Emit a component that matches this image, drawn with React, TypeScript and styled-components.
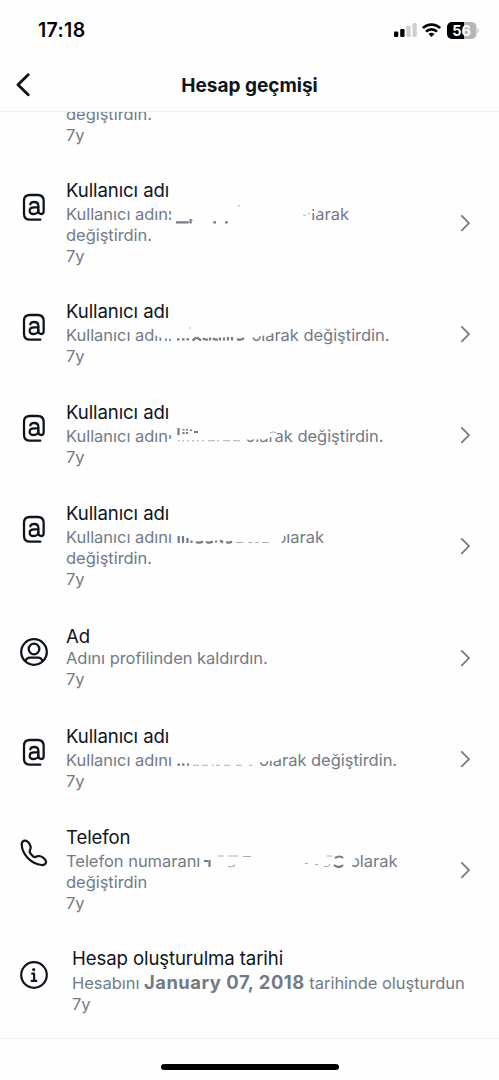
import React from "react";
import styled, { createGlobalStyle } from "styled-components";

const GlobalStyle = createGlobalStyle`
  * { box-sizing: border-box; }
  body {
    margin: 0;
    background: #fefefe;
    font-family: Inter, "Liberation Sans", sans-serif;
    color: #10151b;
  }
`;

const Screen = styled.div`
  width: 499px;
  height: 1080px;
  display: flex;
  flex-direction: column;
  overflow: hidden;
  background: #fefefe;
`;

const StatusBar = styled.div`
  height: 60px;
  flex: none;
  display: flex;
  align-items: center;
  justify-content: space-between;
  padding: 0 20.5px 0 38px;
`;

const Clock = styled.span`
  font-size: 19.5px;
  font-weight: 600;
  line-height: 24px;
  letter-spacing: 0.35px;
  color: #050505;
`;

const StatusIcons = styled.div`
  display: flex;
  align-items: center;
  gap: 5.5px;
`;

const Header = styled.header`
  height: 52px;
  flex: none;
  display: grid;
  grid-template-columns: 60px 1fr 60px;
  align-items: center;
  padding-bottom: 1px;
  border-bottom: 1px solid #eef0f2;
`;

const BackButton = styled.button`
  display: flex;
  padding: 0 0 0 15px;
  border: 0;
  background: none;
`;

const Title = styled.h1`
  margin: 0;
  padding-top: 1px;
  text-align: center;
  font-size: 19px;
  font-weight: 700;
  line-height: 24px;
`;

const List = styled.main`
  height: 927px;
  flex: none;
  overflow: hidden;
  border-bottom: 1px solid #eef0f2;
`;

const Tail = styled.div`
  height: 51px;
  margin-top: -8.5px;
  margin-bottom: 8px;
  padding-left: 66px;
`;

const Row = styled.section<{ $h: number }>`
  height: ${(p) => p.$h}px;
  display: grid;
  grid-template-columns: 66px 1fr 39px;
  align-items: center;
`;

const IconSlot = styled.div`
  align-self: start;
  width: 66px;
  height: 28px;
  margin-top: 30.5px;
  padding-left: 20px;
  display: flex;
  align-items: center;
`;

const Body = styled.div<{ $indent?: boolean }>`
  padding-left: ${(p) => (p.$indent ? 6 : 0)}px;
  white-space: nowrap;
`;

const Name = styled.h2`
  margin: 0;
  font-size: 18.6px;
  font-weight: 400;
  line-height: 22px;
  letter-spacing: -0.1px;
`;

const Line = styled.div<{ $gap?: number }>`
  position: relative;
  display: flex;
  align-items: baseline;
  margin-top: ${(p) => p.$gap ?? 0}px;
  font-size: 16.5px;
  line-height: 21px;
  letter-spacing: -0.04px;
  color: #737b85;
`;

const Lead = styled.span<{ $w: number }>`
  flex: none;
  width: ${(p) => p.$w}px;
`;

const Strong = styled.strong`
  font-size: 18.4px;
  font-weight: 700;
  letter-spacing: 0.53px;
  margin: 0 4.5px;
`;

const Scribble = styled.svg`
  position: absolute;
  left: 0;
  top: 0;
  overflow: visible;
`;

const HomeArea = styled.footer`
  flex: 1;
  display: flex;
  justify-content: center;
  padding-top: 25px;
`;

const HomeBar = styled.div`
  width: 178px;
  height: 6px;
  border-radius: 3px;
  background: #000;
`;

const BatteryLabel = styled.text`
  font: 700 14.5px Inter, sans-serif;
  fill: #fff;
`;

const Signal = () => (
  <svg width="23" height="14" viewBox="0 0 23 14">
    <rect x="0" y="8.6" width="4.3" height="5.4" rx="1.2" />
    <rect x="6.2" y="6" width="4.3" height="8" rx="1.2" />
    <rect x="12.4" y="3" width="4.3" height="11" rx="1.2" fill="#cfcfcf" />
    <rect x="18.5" y="0" width="4.3" height="14" rx="1.2" fill="#cfcfcf" />
  </svg>
);

const Wifi = () => (
  <svg width="19" height="14" viewBox="0 0 19 14" fill="none" stroke="#000" strokeWidth="2.7">
    <path d="M.9 5.1a12.3 12.3 0 0 1 17.2 0" />
    <path d="M4 8.6a7.8 7.8 0 0 1 11 0" />
    <path d="M6.5 11.1a4.4 4.4 0 0 1 6 0L9.5 14z" fill="#000" stroke="none" />
  </svg>
);

const Battery = () => (
  <svg width="32" height="17" viewBox="0 0 32 17">
    <defs>
      <clipPath id="cell"><rect width="29.5" height="17" rx="5" /></clipPath>
    </defs>
    <g clipPath="url(#cell)">
      <rect width="30" height="17" fill="#b5b5b5" />
      <rect width="17" height="17" fill="#000" />
    </g>
    <path d="M30.500 5.800c1.600.6 1.600 4.800 0 5.400z" fill="#b5b5b5" />
    <BatteryLabel x="14.500" y="13.700" textAnchor="middle">56</BatteryLabel>
  </svg>
);

const Back = () => (
  <svg width="16" height="24" viewBox="0 0 16 24" fill="none" stroke="#0d1217" strokeWidth="2.8" strokeLinecap="round" strokeLinejoin="round">
    <path d="M13.200 1.700 3 11.700l10.200 10" />
  </svg>
);

const Chevron = () => (
  <svg width="12" height="19" viewBox="0 0 12 19" fill="none" stroke="#737b85" strokeWidth="1.8" strokeLinecap="round" strokeLinejoin="round">
    <path d="M1.800 2.900 9 10.100l-7.200 7.200" />
  </svg>
);

const AtIcon = () => (
  <svg width="28" height="28" viewBox="0 0 84 84" fill="none" stroke="#10151b" strokeWidth="6.800" strokeLinecap="round" strokeLinejoin="round">
    <path d="M61 80H30C18 80 12 73 12 62V24C12 12 19 6 30 6H53C65 6 71 13 71 24V54C71 60 69 63 65 63C59 63 55 60 55 54V38C55 31 50 27 43 27C37 27 32 30 31 34" />
    <path d="M55 43H43C34 43 29 47 29 53S34 63 41 63C49 63 55 58 55 51" />
  </svg>
);

const ProfileIcon = () => (
  <svg width="28" height="28" viewBox="0 0 28 28" fill="none" stroke="#10151b" strokeWidth="2.300" strokeLinejoin="round">
    <circle cx="14" cy="14" r="12.800" />
    <circle cx="14" cy="11" r="5.300" />
    <path d="M5.600 23.200C6.100 20.500 7.700 19.600 10 19.600h8c2.300 0 3.900.9 4.400 3.600" />
  </svg>
);

const PhoneIcon = () => (
  <svg width="28" height="28" viewBox="0 0 84 84" fill="none" stroke="#10151b" strokeWidth="6.600" strokeLinejoin="round">
    <path d="M17 5C11 3 5 9 5 16C6 46 33 75 65 78C72 79 80 73 78 67C76 59 66 52 58 51C52 50 48 56 43 54C38 52 30 43 29 38C28 33 34 29 32 24C30 16 24 7 17 5Z" />
  </svg>
);

const InfoIcon = () => (
  <svg width="28" height="28" viewBox="0 0 28 28" fill="none" stroke="#10151b" strokeWidth="2.200" strokeLinecap="round" strokeLinejoin="round">
    <circle cx="14" cy="14" r="12.800" />
    <path d="M12.100 12.600h2v7M11.700 19.900h4.600" />
    <circle cx="13.700" cy="8.600" r="1.600" fill="#10151b" stroke="none" />
  </svg>
);

/* Hand-erased area of a line: `wipe` covers, `ink` is what is left over. */
const Erased = ({ wipe, ink, fine }: { wipe: string; ink?: string; fine?: string }) => (
  <Scribble width="400" height="21" viewBox="0 0 400 21">
    <path d={wipe} fill="#fefefe" />
    {ink && <path d={ink} fill="none" stroke="#737b85" strokeWidth="2.200" />}
    {fine && <path d={fine} fill="none" stroke="#a9aeb5" strokeWidth="1.100" />}
  </Scribble>
);

type Item = {
  h: number;
  icon: React.ReactNode;
  name: string;
  lead: string;
  at?: number;
  rest?: string;
  second?: string;
  gap?: number;
  marks?: React.ReactNode;
};

const items: Item[] = [
  {
    h: 120, icon: <AtIcon />, name: "Kullanıcı adı", lead: "Kullanıcı adını", at: 235.500, rest: "olarak", second: "değiştirdin.",
    marks: <Erased
      wipe="M102 10.500h5v3h-5zM234 0H246V21H234zM244 0h5V5h-5zM244 7h6v2h-6zM248 0h7l-3 9-4 1z"
      ink="M110 18.400h12.700M124.600 15v4.600M147.300 18.400h2.700M159 18.400h2.700"
      fine="M126 16.500h1M171.500 2h2.500M237 11h3M242 9.500h2" />,
  },
  {
    h: 101, icon: <AtIcon />, name: "Kullanıcı adı", lead: "Kullanıcı adını", at: 185.400, rest: "olarak değiştirdin.",
    marks: <Erased
      wipe="M88.500 0H107V14L96 13 88.500 10zM184 0H208L207 8 201 10 184 13z"
      ink="M111 14.300h2.500M116 14.300h2.500M120.500 14.300h2.500M126.500 15.500l4-3M131 12.500l4 3M137 13q1 2 5 1.500M144 12.500v3M147 13q1 2 5 1.500M154 12.500v3M158 12.500v3M162 12v3.500M166 12v3.500M171 14q4 2 7-1"
      fine="M123 3h2" />,
  },
  {
    h: 101, icon: <AtIcon />, name: "Kullanıcı adı", lead: "Kullanıcı adını", at: 179.400, rest: "olarak değiştirdin.",
    marks: <Erased
      wipe="M102 0h5V9h-5zM102 13h5v6h-5zM178 0H209V6L212 9 211 12 205 11 200 13 178 13.800z"
      ink="M112.500 2v7M117.500 3v1.500M117.500 6v2M121 3v1.500M121 6v2M125 3.500v1.500M128 6h4"
      fine="M112 14.700h2M116 14.700h2M121 14.700h2M126 14.700h2M131 14.700h2M136 14.700h2M142 14.700h7M151 14.700h2M157 14.700h7M167 14.700h7M204 7q3-2 6 0" />,
  },
  {
    h: 122.500, icon: <AtIcon />, name: "Kullanıcı adı", lead: "Kullanıcı adını", at: 210.500, rest: "olarak", second: "değiştirdin.",
    marks: <Erased
      wipe="M209 0H221V7L218 9 216 15 209 21zM218 0H225V7H218z"
      ink="M112.700 9v7M117 9v7M121.500 11v5M125.500 13.500v2.500M130 15q3 1.500 7-.5M140 15q3 1.500 7-.5M150 13.500v2M154 13.500l3 2M160 15q3 1.500 6-.5"
      fine="M170 15.500h7M182 15.500h4M189 15.500h4M196 15.500h7" />,
  },
  { h: 100.500, icon: <ProfileIcon />, name: "Ad", lead: "Adını profilinden kaldırdın.", gap: 1 },
  {
    h: 101, icon: <AtIcon />, name: "Kullanıcı adı", lead: "Kullanıcı adını", at: 193, rest: "olarak değiştirdin.",
    marks: <Erased
      wipe="M192 0H218L217 8 210 10 192 12.500z"
      ink="M111.500 14.700h2.500M116 14.700h2.500M121 14.700h2"
      fine="M127 15.300h6M136 15.300h6M146 15.300h2M150 15.300h4M158 15.300h6M170 15.300h6M183 15.300h3" />,
  },
  {
    h: 122, icon: <PhoneIcon />, name: "Telefon", lead: "Telefon numaranı", at: 284, rest: "olarak", second: "değiştirdin",
    marks: <Erased
      wipe="M282 0H291V7L288 8 287 14 282 15z"
      ink="M138 10h4M143.500 9v7M269 7q5-3 8 0M268 14q5 4 9 0"
      fine="M152 5h6M162 5h10M162 15q4 2 7-1M177 5.500h8M239 12.500h3M249 13.500h3M258 15q4 2 6-2M261 5h5" />,
  },
];

export default function App() {
  return (
    <>
      <GlobalStyle />
      <Screen>
        <StatusBar>
          <Clock>17:18</Clock>
          <StatusIcons><Signal /><Wifi /><Battery /></StatusIcons>
        </StatusBar>
        <Header>
          <BackButton aria-label="Geri"><Back /></BackButton>
          <Title>Hesap geçmişi</Title>
        </Header>
        <List>
          <Tail>
            <Line>değiştirdin.</Line>
            <Line>7y</Line>
          </Tail>
          {items.map((item, i) => (
            <Row key={i} $h={item.h}>
              <IconSlot>{item.icon}</IconSlot>
              <Body>
                <Name>{item.name}</Name>
                <Line $gap={item.gap ?? 3}>
                  {item.at ? <Lead $w={item.at}>{item.lead}</Lead> : item.lead}
                  {item.rest}
                  {item.marks}
                </Line>
                {item.second && <Line>{item.second}</Line>}
                <Line>7y</Line>
              </Body>
              <Chevron />
            </Row>
          ))}
          <Row $h={101}>
            <IconSlot>
              <InfoIcon />
            </IconSlot>
            <Body $indent>
              <Name>Hesap oluşturulma tarihi</Name>
              <Line $gap={3}>
                Hesabını<Strong>January 07, 2018</Strong>tarihinde oluşturdun
              </Line>
              <Line>7y</Line>
            </Body>
          </Row>
        </List>
        <HomeArea><HomeBar /></HomeArea>
      </Screen>
    </>
  );
}
